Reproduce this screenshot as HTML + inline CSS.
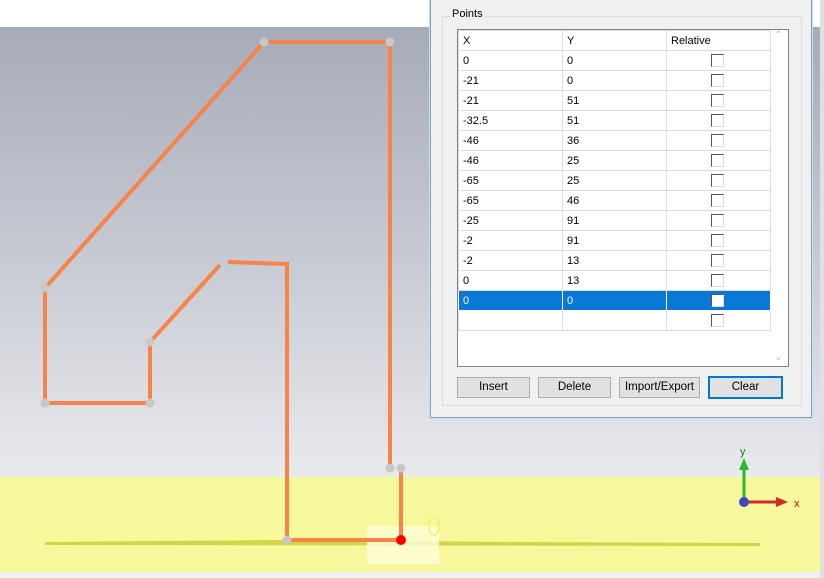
<!DOCTYPE html><html><head><style>
body{margin:0;width:824px;height:578px;overflow:hidden;font-family:"Liberation Sans",sans-serif;font-size:11px;background:#fff;position:relative}
.view{position:absolute;left:0;top:27px;width:820px;height:545px;background:linear-gradient(#a7abb8,#c9ccd4 45%,#e9eaee 83%)}
.yel{position:absolute;left:0;top:477px;width:820px;height:95px;background:#f7f79c}
.dlg{position:absolute;left:430px;top:-2px;width:380px;height:418px;background:#f0f0f0;border:1px solid #7aa3cf;box-shadow:0 0 0 1px #cfdcec}
.grp{position:absolute;left:11px;top:17px;width:358px;height:388px;border:1px solid #dcdcdc}
.lbl{position:absolute;left:19px;top:9px;background:#f0f0f0;padding:0 2px}
table{position:absolute;left:27px;top:31px;border-collapse:collapse;background:#fff}
.tb{position:absolute;left:26px;top:30px;width:330px;height:336px;border:1px solid #828282;background:#fff}
.sb{position:absolute;left:339px;top:31px;width:17px;height:335px;background:#fff;color:#bbb;font-size:10px;text-align:center}
td{height:19px;border:1px solid #dcdcdc;padding:0 4px;width:95px;font-size:11px}
th{height:19px;border:1px solid #dcdcdc;background:#fff;text-align:left;font-weight:normal;padding:0 4px}
.cb{display:inline-block;width:11px;height:11px;border:1px solid #555;border-right-color:#ddd;border-bottom-color:#ddd;background:#fff;margin-left:40px;vertical-align:middle}
tr.sel td{background:#0a78d7;color:#fff;border-color:#fff}
.btn{position:absolute;top:378px;height:19px;border:1px solid #adadad;background:#e1e1e1;text-align:center;line-height:19px;font-size:11.5px}
</style></head><body>
<div class="view"></div><div class="yel"></div>
<svg style="position:absolute;left:0;top:0" width="824" height="578">
<polygon points="45,542 280,540 520,542 760,543 760,546 45,545" fill="#d4d44a"/>
<rect x="367" y="526" width="72" height="38" fill="#fdfdd8" opacity="0.8"/>
<ellipse cx="434" cy="526" rx="5" ry="9" fill="none" stroke="#f0f070" stroke-width="1.5"/>
<g stroke="#f7834a" stroke-width="4" fill="none">
<polyline points="264,42 390,42 390,468"/>
<polyline points="401,468 401,540 287,540 287,264 228,262"/>
<polyline points="220,265 150,342 150,403 45,403 45,288 264,42"/>
</g>
<g fill="#c8c8c8"><circle cx="264" cy="42" r="4.5"/><circle cx="390" cy="42" r="4.5"/><circle cx="390" cy="468" r="4.5"/><circle cx="401" cy="468" r="4.5"/><circle cx="287" cy="540" r="4.5"/><circle cx="150" cy="342" r="4.5"/><circle cx="150" cy="403" r="4.5"/><circle cx="45" cy="403" r="4.5"/><circle cx="45" cy="288" r="4.5"/></g>
<circle cx="401" cy="540" r="5" fill="#f00"/>
<line x1="744" y1="502" x2="744" y2="468" stroke="#2eb82e" stroke-width="3"/><polygon points="739,470 744,458 749,470" fill="#2eb82e"/>
<line x1="744" y1="502" x2="778" y2="502" stroke="#d02a2a" stroke-width="3"/><polygon points="776,497 788,502 776,507" fill="#d02a2a"/>
<circle cx="744" cy="502" r="5" fill="#3a4ac0"/>
<text x="740" y="455" fill="#118811" font-size="11" font-family="Liberation Sans">y</text>
<text x="794" y="507" fill="#c00" font-size="11" font-family="Liberation Sans">x</text>
<rect x="0" y="572" width="824" height="6" fill="#f0f0f0"/><rect x="820" y="0" width="4" height="578" fill="#e0e0e0"/>
</svg>
<div class="dlg"><div class="grp"></div><div class="lbl">Points</div>
<div class="tb"></div>
<div class="sb">&#8963;<div style="position:absolute;bottom:2px;width:17px">&#8964;</div></div>
<table>
<tr><th style="width:95px">X</th><th style="width:95px">Y</th><th style="width:95px">Relative</th></tr>
<tr><td>0</td><td>0</td><td><span class="cb"></span></td></tr>
<tr><td>-21</td><td>0</td><td><span class="cb"></span></td></tr>
<tr><td>-21</td><td>51</td><td><span class="cb"></span></td></tr>
<tr><td>-32.5</td><td>51</td><td><span class="cb"></span></td></tr>
<tr><td>-46</td><td>36</td><td><span class="cb"></span></td></tr>
<tr><td>-46</td><td>25</td><td><span class="cb"></span></td></tr>
<tr><td>-65</td><td>25</td><td><span class="cb"></span></td></tr>
<tr><td>-65</td><td>46</td><td><span class="cb"></span></td></tr>
<tr><td>-25</td><td>91</td><td><span class="cb"></span></td></tr>
<tr><td>-2</td><td>91</td><td><span class="cb"></span></td></tr>
<tr><td>-2</td><td>13</td><td><span class="cb"></span></td></tr>
<tr><td>0</td><td>13</td><td><span class="cb"></span></td></tr>
<tr class="sel"><td>0</td><td>0</td><td><span class="cb"></span></td></tr>
<tr><td></td><td></td><td><span class="cb"></span></td></tr>
</table>
<div class="btn" style="left:26px;width:71px">Insert</div>
<div class="btn" style="left:107px;width:71px">Delete</div>
<div class="btn" style="left:188px;width:79px">Import/Export</div>
<div class="btn" style="left:277px;width:71px;border:2px solid #0078d7;top:377px">Clear</div>
</div>
</body></html>
